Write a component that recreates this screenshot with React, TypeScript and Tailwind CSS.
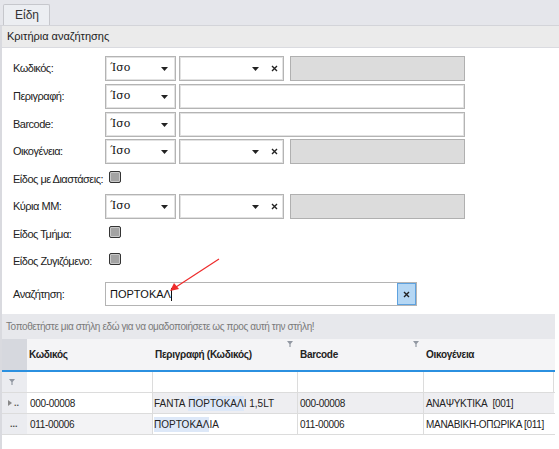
import React from 'react'

const font = { fontFamily: '"Liberation Sans", Arial, sans-serif' }

function Arrow() {
  return (
    <svg width="7" height="4" viewBox="0 0 7 4" className="shrink-0">
      <path d="M0 0h7L3.5 4z" fill="#222" />
    </svg>
  )
}

function Cross() {
  return (
    <svg width="7" height="7" viewBox="0 0 7 7" className="shrink-0">
      <path d="M1 1l5 5M6 1l-5 5" stroke="#222" strokeWidth="1.4" />
    </svg>
  )
}

function Funnel({ className = '' }: { className?: string }) {
  return (
    <svg width="6" height="6" viewBox="0 0 6 6" className={className}>
      <path d="M0 0h6L3.6 3v3H2.4V3z" fill="#9298a2" />
    </svg>
  )
}

function OpSelect() {
  return (
    <div className="flex items-center justify-between w-[71px] h-full border border-[#b4b4b4] bg-white pl-[4px] pr-[7px] shadow-[inset_0_0_0_1px_#e2e2e2]">
      <span className="text-[11px] text-[#111]" style={{ fontFamily: '"DejaVu Serif", serif' }}>Ίσο</span>
      <Arrow />
    </div>
  )
}

function Combo() {
  return (
    <div className="flex items-center justify-end gap-[12px] w-[105px] h-full border border-[#b4b4b4] bg-white pr-[5px] shadow-[inset_0_0_0_1px_#e2e2e2]">
      <Arrow />
      <Cross />
    </div>
  )
}

function Label({ children }: { children: React.ReactNode }) {
  return (
    <div className="w-[92px] shrink-0 text-[11px] tracking-[-0.5px] text-[#222] whitespace-nowrap">{children}</div>
  )
}

function Checkbox() {
  return (
    <div className="w-[12px] h-[12px] rounded-[2px] border-[1.5px] border-[#333] bg-[#a3a3a3] shadow-[inset_0_0_0_1px_#c9c9c9]" />
  )
}

function RangeRow({ label }: { label: string }) {
  return (
    <div className="flex items-center h-[25px]">
      <Label>{label}</Label>
      <div className="flex h-full gap-[3px]">
        <OpSelect />
        <Combo />
        <div className="w-[175px] h-full border border-[#b0b0b0] bg-[#dcdcdc] ml-[3px]" />
      </div>
    </div>
  )
}

function TextRow({ label }: { label: string }) {
  return (
    <div className="flex items-center h-[25px]">
      <Label>{label}</Label>
      <div className="flex h-full gap-[3px]">
        <OpSelect />
        <div className="w-[286px] h-full border border-[#b4b4b4] bg-white shadow-[inset_0_0_0_1px_#e2e2e2]" />
      </div>
    </div>
  )
}

function CheckRow({ label, className = '' }: { label: string; className?: string }) {
  return (
    <div className={`flex items-center h-[14px] ${className}`}>
      <Label>
        <span className="relative top-[2px]">{label}</span>
      </Label>
      <div className="pl-[4px]">
        <Checkbox />
      </div>
    </div>
  )
}

const cols = [
  { title: 'Κωδικός', w: 'w-[126px]' },
  { title: 'Περιγραφή (Κωδικός)', w: 'w-[145px]' },
  { title: 'Barcode', w: 'w-[126px]' },
  { title: 'Οικογένεια', w: 'w-[130px]' },
]

export default function App() {
  return (
    <div className="w-[559px] h-[449px] bg-white overflow-hidden relative" style={font}>
      {/* tab strip */}
      <div className="h-[26px] bg-[#e5e6eb] border-b border-[#d3d4d9] flex items-end pl-[3px]">
        <div className="w-[47px] h-[21px] bg-[#eceef2] border border-b-0 border-[#c6c7cc] rounded-t-[2px] pl-[11px] text-[12px] text-[#333] leading-[20px]">
          Είδη
        </div>
      </div>

      <div className="border-l-2 border-[#d9dadf] h-[423px]">
        {/* criteria header */}
        <div className="h-[22px] bg-[#ebebeb] border-b border-[#dadbe0] flex items-center pl-[5px] text-[11px] text-[#222]">
          Κριτήρια αναζήτησης
        </div>

        {/* form */}
        <div className="pl-[11px] flex flex-col">
          <div className="mt-[8px]">
            <RangeRow label="Κωδικός:" />
          </div>
          <div className="mt-[3px]">
            <TextRow label="Περιγραφή:" />
          </div>
          <div className="mt-[3px]">
            <TextRow label="Barcode:" />
          </div>
          <div className="mt-[2px]">
            <RangeRow label="Οικογένεια:" />
          </div>
          <CheckRow label="Είδος με Διαστάσεις:" className="mt-[6px]" />
          <div className="mt-[10px]">
            <RangeRow label="Κύρια ΜΜ:" />
          </div>
          <CheckRow label="Είδος Τμήμα:" className="mt-[6px]" />
          <CheckRow label="Είδος Ζυγιζόμενο:" className="mt-[13px]" />
          <div className="flex items-center h-[24px] mt-[16px]">
            <Label>Αναζήτηση:</Label>
            <div className="flex items-center w-[312px] h-full border border-[#b4b4b4] bg-white">
              <div className="flex-1 pl-[4px] flex items-center text-[11px] text-[#111]">
                ΠΟΡΤΟΚΑΛ<span className="w-px h-[13px] bg-[#111]" />
              </div>
              <div className="w-[19px] h-full bg-[#b5d7f4] border border-[#5ea2df] flex items-center justify-center">
                <Cross />
              </div>
            </div>
          </div>
        </div>

        {/* grid */}
        <div className="mt-[8px] w-[553px]">
          <div className="h-[25px] bg-[#e7e8ec] flex items-center pl-[4px] text-[10px] tracking-[-0.4px] text-[#7a7a7a] whitespace-nowrap">
            Τοποθετήστε μια στήλη εδώ για να ομαδοποιήσετε ως προς αυτή την στήλη!
          </div>
          <div className="flex h-[33px] bg-[#f4f4f6] border-b-2 border-[#2b90e0]">
            <div className="w-[25px] bg-[#d6d8de]" />
            {cols.map((c, i) => (
              <div key={c.title} className={`${c.w} relative flex items-center pl-[2px] text-[10px] tracking-[-0.3px] font-bold text-[#222] whitespace-nowrap`}>
                {c.title}
                {i >= 1 && i <= 2 && <Funnel className="absolute right-[5px] top-[2px]" />}
              </div>
            ))}
          </div>
          {/* filter row */}
          <div className="flex h-[21px] border-b border-[#dcdcdc]">
            <div className="w-[25px] bg-[#ebecf0] flex items-center pl-[7px]">
              <Funnel />
            </div>
            {cols.map((c) => (
              <div key={c.title} className={`${c.w} bg-white border-r border-[#dcdcdc]`} />
            ))}
          </div>
          {/* row 1 */}
          <div className="flex h-[21px] border-b border-[#dcdcdc] text-[10px] text-[#222] whitespace-nowrap">
            <div className="w-[25px] bg-[#ebecf0] flex items-center pl-[6px] gap-[2px] text-[#555]">
              <svg width="4" height="6" viewBox="0 0 4 6"><path d="M0 0l4 3-4 3z" fill="#888" /></svg>
              <span className="text-[9px] leading-none font-bold">..</span>
            </div>
            <div className="w-[126px] bg-white border-r border-[#dcdcdc] flex items-center pl-[3px] tracking-[-0.3px]">000-00008</div>
            <div className="w-[145px] bg-[#eeeef1] border-r border-[#dcdcdc] flex items-center pl-[1px]">
              FANTA&nbsp;<span className="bg-[#dde8f8]">ΠΟΡΤΟΚΑΛ</span>Ι 1,5LT
            </div>
            <div className="w-[126px] bg-[#eeeef1] border-r border-[#dcdcdc] flex items-center pl-[2px] tracking-[-0.3px]">000-00008</div>
            <div className="w-[130px] bg-[#eeeef1] flex items-center pl-[2px] tracking-[-0.3px]">ΑΝΑΨΥΚΤΙΚΑ&nbsp; [001]</div>
          </div>
          {/* row 2 */}
          <div className="flex h-[21px] border-b border-[#dcdcdc] text-[10px] text-[#222] whitespace-nowrap">
            <div className="w-[25px] bg-[#ebecf0] flex items-center pl-[8px] text-[#444]">
              <span className="text-[9px] leading-none font-bold">...</span>
            </div>
            <div className="w-[126px] bg-[#f3f3f5] border-r border-[#dcdcdc] flex items-center pl-[3px] tracking-[-0.3px]">011-00006</div>
            <div className="w-[145px] bg-white border-r border-[#dcdcdc] flex items-center pl-[1px]">
              <span className="bg-[#dde8f8]">ΠΟΡΤΟΚΑΛ</span>ΙΑ
            </div>
            <div className="w-[126px] bg-white border-r border-[#dcdcdc] flex items-center pl-[2px] tracking-[-0.3px]">011-00006</div>
            <div className="w-[130px] bg-white flex items-center pl-[2px] tracking-[-0.3px]">ΜΑΝΑΒΙΚΗ-ΟΠΩΡΙΚΑ [011]</div>
          </div>
        </div>
      </div>

      {/* red arrow annotation */}
      <svg className="absolute left-0 top-0 pointer-events-none" width="559" height="449">
        <line x1="219" y1="259" x2="176" y2="287" stroke="#ee2b2b" strokeWidth="1.2" />
        <path d="M170 291l4-8 5 6z" fill="#ee2b2b" />
      </svg>
    </div>
  )
}
